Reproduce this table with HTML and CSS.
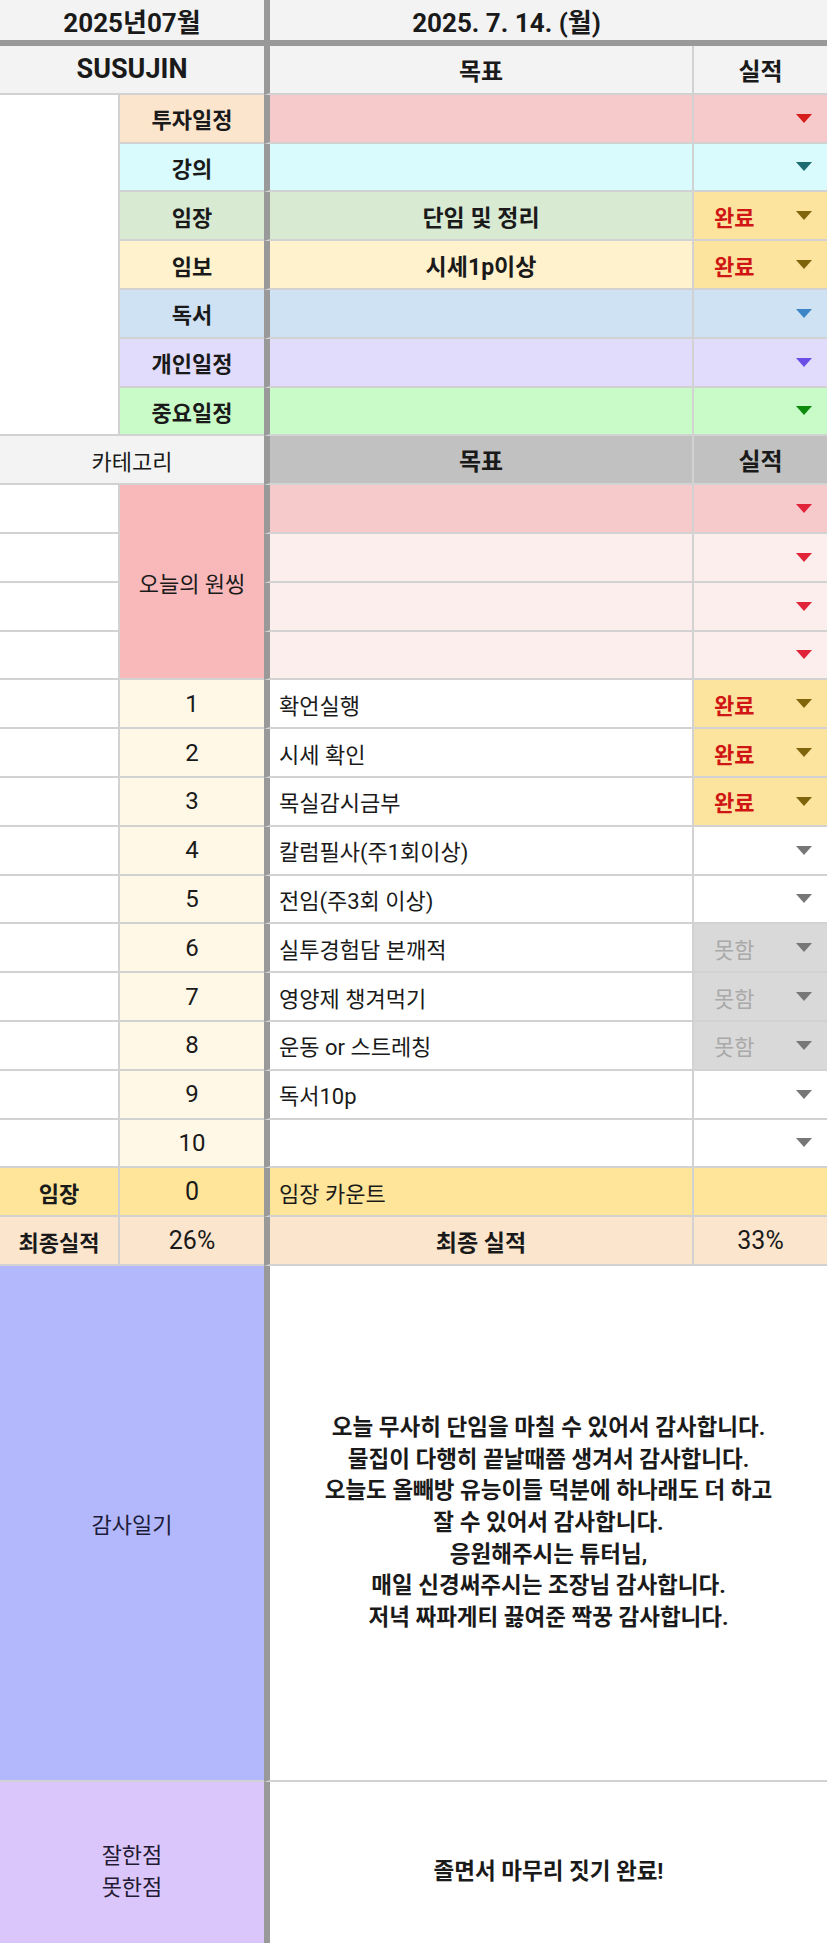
FILE: index.html
```html
<!DOCTYPE html>
<html lang="ko">
<head>
    <meta charset="UTF-8">
    <meta name="viewport" content="width=device-width, initial-scale=1.0">
    <title>2025년07월 데일리 체크</title>
    <link rel="stylesheet" href="styles.css">
</head>
<body>
    <div class="sheet">
        <!-- 상단 날짜 -->
        <div class="cell head span2">2025년07월</div>
        <div class="cell head span2 goal date">2025. 7. 14. (월)</div>

        <div class="cell sub span2 latin">SUSUJIN</div>
        <div class="cell sub goal">목표</div>
        <div class="cell sub">실적</div>

        <!-- 일정 카테고리 -->
        <div class="cell first rows7"></div>
        <div class="cell label peach">투자일정</div>
        <div class="cell goal pink"></div>
        <div class="cell result pink"><span class="arrow a-red"></span></div>

        <div class="cell label cyan">강의</div>
        <div class="cell goal cyan"></div>
        <div class="cell result cyan"><span class="arrow a-teal"></span></div>

        <div class="cell label sage">임장</div>
        <div class="cell goal sage strong">단임 및 정리</div>
        <div class="cell result done"><span class="val">완료</span><span class="arrow a-olive"></span></div>

        <div class="cell label cream">임보</div>
        <div class="cell goal cream strong">시세1p이상</div>
        <div class="cell result done"><span class="val">완료</span><span class="arrow a-olive"></span></div>

        <div class="cell label sky">독서</div>
        <div class="cell goal sky"></div>
        <div class="cell result sky"><span class="arrow a-blue"></span></div>

        <div class="cell label lilac">개인일정</div>
        <div class="cell goal lilac"></div>
        <div class="cell result lilac"><span class="arrow a-purple"></span></div>

        <div class="cell label mint">중요일정</div>
        <div class="cell goal mint"></div>
        <div class="cell result mint"><span class="arrow a-green"></span></div>

        <!-- 오늘의 원씽 -->
        <div class="cell sub span2 normal">카테고리</div>
        <div class="cell sub goal dark">목표</div>
        <div class="cell sub dark">실적</div>

        <div class="cell first"></div>
        <div class="cell onething rows4">오늘의 원씽</div>
        <div class="cell goal pink"></div>
        <div class="cell result pink"><span class="arrow a-rose"></span></div>

        <div class="cell first"></div>
        <div class="cell goal blush"></div>
        <div class="cell result blush"><span class="arrow a-rose"></span></div>

        <div class="cell first"></div>
        <div class="cell goal blush"></div>
        <div class="cell result blush"><span class="arrow a-rose"></span></div>

        <div class="cell first"></div>
        <div class="cell goal blush"></div>
        <div class="cell result blush"><span class="arrow a-rose"></span></div>

        <!-- 루틴 -->
        <div class="cell first"></div>
        <div class="cell num">1</div>
        <div class="cell goal text">확언실행</div>
        <div class="cell result done"><span class="val">완료</span><span class="arrow a-olive"></span></div>

        <div class="cell first"></div>
        <div class="cell num">2</div>
        <div class="cell goal text">시세 확인</div>
        <div class="cell result done"><span class="val">완료</span><span class="arrow a-olive"></span></div>

        <div class="cell first"></div>
        <div class="cell num">3</div>
        <div class="cell goal text">목실감시금부</div>
        <div class="cell result done"><span class="val">완료</span><span class="arrow a-olive"></span></div>

        <div class="cell first"></div>
        <div class="cell num">4</div>
        <div class="cell goal text">칼럼필사(주1회이상)</div>
        <div class="cell result"><span class="arrow a-gray"></span></div>

        <div class="cell first"></div>
        <div class="cell num">5</div>
        <div class="cell goal text">전임(주3회 이상)</div>
        <div class="cell result"><span class="arrow a-gray"></span></div>

        <div class="cell first"></div>
        <div class="cell num">6</div>
        <div class="cell goal text">실투경험담 본깨적</div>
        <div class="cell result miss"><span class="val">못함</span><span class="arrow a-gray"></span></div>

        <div class="cell first"></div>
        <div class="cell num">7</div>
        <div class="cell goal text">영양제 챙겨먹기</div>
        <div class="cell result miss"><span class="val">못함</span><span class="arrow a-gray"></span></div>

        <div class="cell first"></div>
        <div class="cell num">8</div>
        <div class="cell goal text">운동 or 스트레칭</div>
        <div class="cell result miss"><span class="val">못함</span><span class="arrow a-gray"></span></div>

        <div class="cell first"></div>
        <div class="cell num">9</div>
        <div class="cell goal text">독서10p</div>
        <div class="cell result"><span class="arrow a-gray"></span></div>

        <div class="cell first"></div>
        <div class="cell num">10</div>
        <div class="cell goal text"></div>
        <div class="cell result"><span class="arrow a-gray"></span></div>

        <!-- 합계 -->
        <div class="cell first yellow strong">임장</div>
        <div class="cell yellow figure">0</div>
        <div class="cell goal text yellow">임장 카운트</div>
        <div class="cell yellow"></div>

        <div class="cell first peach strong">최종실적</div>
        <div class="cell peach figure">26%</div>
        <div class="cell goal peach strong">최종 실적</div>
        <div class="cell peach figure">33%</div>

        <!-- 일기 -->
        <div class="cell span2 diary-label">감사일기</div>
        <div class="cell span2 goal diary">오늘 무사히 단임을 마칠 수 있어서 감사합니다.<br>물집이 다행히 끝날때쯤 생겨서 감사합니다.<br>오늘도 올빼방 유능이들 덕분에 하나래도 더 하고<br>잘 수 있어서 감사합니다.<br>응원해주시는 튜터님,<br>매일 신경써주시는 조장님 감사합니다.<br>저녁 짜파게티 끓여준 짝꿍 감사합니다.</div>

        <div class="cell span2 review-label">잘한점<br>못한점</div>
        <div class="cell span2 goal diary">졸면서 마무리 짓기 완료!</div>
    </div>
</body>
</html>
```

FILE: styles.css
```css
body {
    margin: 0;
    background-color: #fff;
    font-family: Roboto, "Noto Sans CJK KR", sans-serif;
    color: #1a1a1a;
}
.sheet {
    display: grid;
    grid-template-columns: 120px 144px 430px 133px;
    grid-template-rows: 46px repeat(25, 48.8px) 516px 182px;
    width: 827px;
    height: 1943px;
    overflow: hidden;
}
.cell {
    display: flex;
    align-items: center;
    justify-content: center;
    box-sizing: border-box;
    border-bottom: 2px solid #d2d2d2;
    font-size: 22px;
    white-space: nowrap;
}
.first {
    border-right: 2px solid #d2d2d2;
}
.goal {
    border-left: 6px solid #999;
    border-right: 2px solid #d2d2d2;
}
.span2 {
    grid-column: span 2;
}
.rows7 {
    grid-row: span 7;
}
.rows4 {
    grid-row: span 4;
}
.head {
    background-color: #f3f3f3;
    border-bottom: 6px solid #999;
    border-right: 0;
    font-size: 26px;
    font-weight: bold;
}
.head.date {
    padding-right: 84px;
}
.sub {
    background-color: #f3f3f3;
    font-size: 24px;
    font-weight: bold;
}
.sub.latin {
    font-size: 27px;
}
.sub.normal {
    font-size: 22px;
    font-weight: normal;
}
.sub.dark {
    background-color: #c1c1c1;
}
.label {
    font-weight: bold;
}
.strong {
    font-weight: bold;
}
.goal.strong {
    font-size: 23px;
}
.text {
    justify-content: flex-start;
    padding-left: 9px;
}
.num {
    background-color: #fff8e6;
    font-size: 24px;
}
.figure {
    font-size: 25px;
}

/* 색상 */
.peach { background-color: #fce5cd; }
.pink { background-color: #f6caca; }
.cyan { background-color: #d9fbfd; }
.sage { background-color: #d9ead3; }
.cream { background-color: #fff2cc; }
.sky { background-color: #cfe2f3; }
.lilac { background-color: #e1dcfb; }
.mint { background-color: #c9fbc8; }
.blush { background-color: #fdeeee; }
.yellow { background-color: #ffe599; }
.onething {
    background-color: #f9b9bb;
}

/* 실적 드롭다운 */
.result {
    justify-content: space-between;
    padding: 0 15px 0 20px;
}
.result .arrow {
    margin-left: auto;
}
.done {
    background-color: #fde49e;
}
.done .val {
    color: #d01515;
    font-weight: bold;
}
.miss {
    background-color: #d9d9d9;
}
.miss .val {
    color: #a9a9a9;
}
.arrow {
    width: 0;
    height: 0;
    border-left: 8px solid transparent;
    border-right: 8px solid transparent;
    border-top: 9px solid #757575;
}
.a-red { border-top-color: #d71c1c; }
.a-teal { border-top-color: #1d6c72; }
.a-olive { border-top-color: #80640c; }
.a-blue { border-top-color: #3d85c6; }
.a-purple { border-top-color: #6a4ee6; }
.a-green { border-top-color: #0b8a0b; }
.a-rose { border-top-color: #e1233a; }
.a-gray { border-top-color: #777; }

/* 일기 */
.diary-label {
    background-color: #b3b8fc;
    color: #1c1c3a;
}
.review-label {
    background-color: #dbc6fb;
    color: #231a33;
    line-height: 32px;
    text-align: center;
}
.diary {
    background-color: #fff;
    border-right: 0;
    text-align: center;
    font-size: 22.5px;
    line-height: 31.7px;
    font-weight: bold;
}
```
